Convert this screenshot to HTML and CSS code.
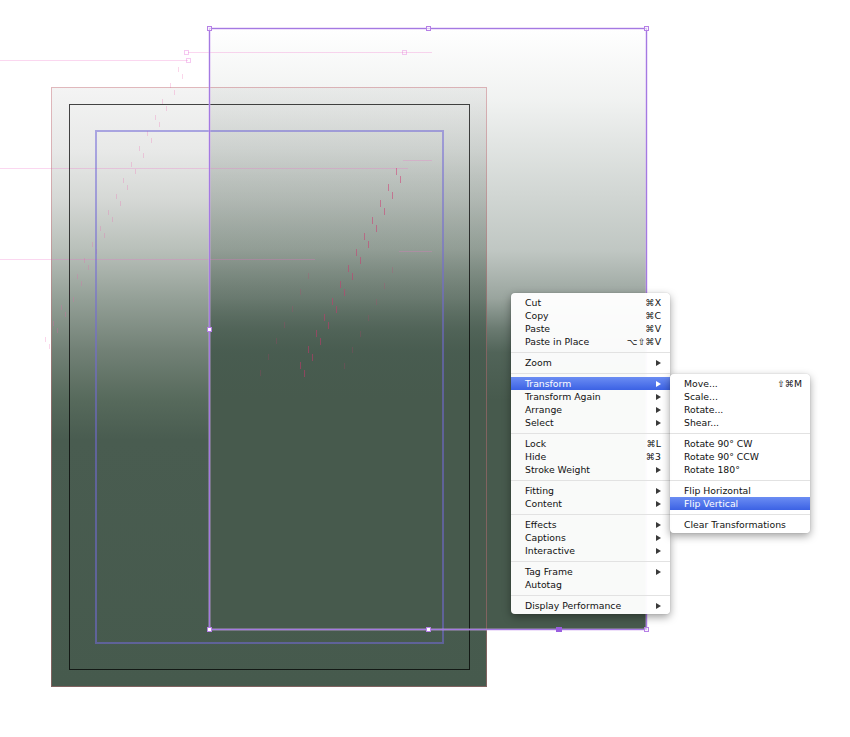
FILE: index.html
```html
<!DOCTYPE html>
<html>
<head>
<meta charset="utf-8">
<link rel="stylesheet" href="styles.css">
</head>
<body>
<div class="canvas">
  <div class="frame-a"></div>
  <div class="frame-b"></div>
  <svg class="overlay" width="850" height="737" viewBox="0 0 850 737">
    <g class="ghost">
      <path d="M0 60.5H188M188 52.5H432M0 168.5H408M403 160.5H432M0 259.5H315M399 251.5H432"/>
    </g>
    <g class="ghost-handles">
      <rect x="186.5" y="58.5" width="4" height="4"/>
      <rect x="184.5" y="50.5" width="4" height="4"/>
      <rect x="402.5" y="50.5" width="4" height="4"/>
    </g>
    <path class="dash-light" d="M178.5 67v5M170.5 83v5M162.5 99v5M155.5 115v5M147.5 131v5M139.5 146v5M131.5 162v5M123.5 178v5M116.5 194v5M108.5 210v5M100.5 226v5M92.5 242v5M84.5 258v5M77.5 274v5M69.5 290v5M61.5 305v5M53.5 321v5M45.5 337v5M182.5 74v5M174.5 90v5M166.5 106v5M159.5 122v5M151.5 138v5M143.5 153v5M135.5 169v5M127.5 185v5M120.5 201v5M112.5 217v5M104.5 233v5M96.5 249v5M88.5 265v5M81.5 281v5M73.5 297v5M65.5 312v5M57.5 328v5M49.5 344v5"/>
    <path class="dash-strong" d="M396.5 168v7M388.5 184v7M380.5 200v7M372.5 217v7M364.5 233v7M356.5 249v7M348.5 265v7M340.5 281v7M332.5 298v7M324.5 314v7M316.5 330v7M308.5 346v7M300.5 362v7M400.5 176v7M392.5 192v7M384.5 208v7M376.5 225v7M368.5 241v7M360.5 257v7M352.5 273v7M344.5 289v7M336.5 306v7M328.5 322v7M320.5 338v7M312.5 354v7M304.5 370v7"/>
    <path class="dash-faint" d="M308.5 273v6M300.5 289v6M292.5 306v6M284.5 322v6M276.5 338v6M268.5 354v6M260.5 370v6M392.5 267v6M384.5 283v6M376.5 299v6M368.5 315v6M360.5 331v6M352.5 347v6M344.5 363v6"/>
    <rect class="a-edge" x="51.5" y="87.5" width="435" height="599"/>
    <rect class="a-stroke" x="69.5" y="104.5" width="400" height="565"/>
    <rect class="a-inner" x="96" y="131" width="347" height="512"/>
    <rect class="b-glow" x="209.5" y="28.5" width="437" height="601"/>
    <rect class="b-sel" x="209.5" y="28.5" width="437" height="601"/>
    <g class="handles">
      <rect x="207.5" y="26.5" width="4" height="4"/>
      <rect x="426.5" y="26.5" width="4" height="4"/>
      <rect x="644.5" y="26.5" width="4" height="4"/>
      <rect x="644.5" y="627.5" width="4" height="4"/>
    </g>
    <g class="handles solid">
      <rect x="207.5" y="327.5" width="4" height="4"/>
      <rect x="207.5" y="627.5" width="4" height="4"/>
      <rect x="426.5" y="627.5" width="4" height="4"/>
    </g>
    <rect class="handle-fill" x="556" y="627" width="6" height="5"/>
  </svg>

  <div class="menu main-menu">
    <div class="item"><span>Cut</span><span class="key">⌘X</span></div>
    <div class="item"><span>Copy</span><span class="key">⌘C</span></div>
    <div class="item"><span>Paste</span><span class="key">⌘V</span></div>
    <div class="item"><span>Paste in Place</span><span class="key">⌥⇧⌘V</span></div>
    <div class="sep"></div>
    <div class="item"><span>Zoom</span><span class="arrow"></span></div>
    <div class="sep"></div>
    <div class="item active"><span>Transform</span><span class="arrow"></span></div>
    <div class="item"><span>Transform Again</span><span class="arrow"></span></div>
    <div class="item"><span>Arrange</span><span class="arrow"></span></div>
    <div class="item"><span>Select</span><span class="arrow"></span></div>
    <div class="sep"></div>
    <div class="item"><span>Lock</span><span class="key">⌘L</span></div>
    <div class="item"><span>Hide</span><span class="key">⌘3</span></div>
    <div class="item"><span>Stroke Weight</span><span class="arrow"></span></div>
    <div class="sep"></div>
    <div class="item"><span>Fitting</span><span class="arrow"></span></div>
    <div class="item"><span>Content</span><span class="arrow"></span></div>
    <div class="sep"></div>
    <div class="item"><span>Effects</span><span class="arrow"></span></div>
    <div class="item"><span>Captions</span><span class="arrow"></span></div>
    <div class="item"><span>Interactive</span><span class="arrow"></span></div>
    <div class="sep"></div>
    <div class="item"><span>Tag Frame</span><span class="arrow"></span></div>
    <div class="item"><span>Autotag</span></div>
    <div class="sep"></div>
    <div class="item"><span>Display Performance</span><span class="arrow"></span></div>
  </div>

  <div class="menu sub-menu">
    <div class="item"><span>Move...</span><span class="key">⇧⌘M</span></div>
    <div class="item"><span>Scale...</span></div>
    <div class="item"><span>Rotate...</span></div>
    <div class="item"><span>Shear...</span></div>
    <div class="sep"></div>
    <div class="item"><span>Rotate 90° CW</span></div>
    <div class="item"><span>Rotate 90° CCW</span></div>
    <div class="item"><span>Rotate 180°</span></div>
    <div class="sep"></div>
    <div class="item"><span>Flip Horizontal</span></div>
    <div class="item active"><span>Flip Vertical</span></div>
    <div class="sep"></div>
    <div class="item"><span>Clear Transformations</span></div>
  </div>
</div>
</body>
</html>
```

FILE: styles.css
```css
html, body {
  margin: 0;
  padding: 0;
  background: #ffffff;
}
body {
  width: 850px;
  height: 737px;
  overflow: hidden;
  font-family: "DejaVu Sans", "Liberation Sans", sans-serif;
}
.canvas {
  position: relative;
  width: 850px;
  height: 737px;
  background: #ffffff;
}
.frame-a {
  position: absolute;
  left: 51px;
  top: 87px;
  width: 436px;
  height: 600px;
  background: linear-gradient(to bottom,
    #f4f4f4 0%,
    #e8e9e8 10.5%,
    #d5d8d5 18.8%,
    #b9c0ba 27%,
    #939f96 35.5%,
    #728176 43.8%,
    #576a5c 52%,
    #495c50 58.8%,
    #465a4d 100%);
}
.frame-b {
  position: absolute;
  left: 209px;
  top: 28px;
  width: 437px;
  height: 601px;
  background: linear-gradient(to bottom,
    rgba(70, 90, 78, 0) 0%,
    rgba(70, 90, 78, 0.08) 12%,
    rgba(70, 90, 78, 0.22) 25%,
    rgba(70, 90, 78, 0.34) 37%,
    rgba(70, 90, 78, 0.55) 45%,
    rgba(70, 90, 78, 0.8) 50%,
    rgba(70, 90, 78, 0.94) 54%,
    rgba(71, 90, 77, 1) 62%,
    rgba(71, 90, 77, 1) 100%);
}
.overlay {
  position: absolute;
  left: 0;
  top: 0;
  fill: none;
}
.ghost path {
  stroke: rgba(240, 110, 200, 0.28);
  stroke-width: 1;
}
.ghost-handles rect {
  fill: none;
  stroke: rgba(230, 120, 220, 0.4);
  stroke-width: 1;
}
.dash-light {
  stroke: rgba(240, 90, 170, 0.25);
  stroke-width: 1;
}
.dash-strong {
  stroke: rgba(210, 50, 110, 0.5);
  stroke-width: 1;
}
.dash-faint {
  stroke: rgba(210, 50, 110, 0.2);
  stroke-width: 1;
}
.a-edge {
  stroke: rgba(200, 110, 120, 0.45);
  stroke-width: 1;
}
.a-stroke {
  stroke: rgba(0, 0, 0, 0.72);
  stroke-width: 1;
}
.a-inner {
  stroke: rgba(115, 105, 215, 0.55);
  stroke-width: 2;
}
.b-glow {
  stroke: rgba(210, 170, 240, 0.35);
  stroke-width: 3;
}
.b-sel {
  stroke: #a37ae2;
  stroke-width: 1;
}
.handles rect {
  fill: rgba(255, 255, 255, 0.6);
  stroke: #b680e6;
  stroke-width: 1;
}
.handles.solid rect {
  fill: #ffffff;
}
.handle-fill {
  fill: #9a5ee0;
}

/* context menus */
.menu {
  position: absolute;
  background: rgba(255, 255, 255, 0.97);
  border-radius: 4px;
  box-shadow: 0 3px 9px rgba(0, 0, 0, 0.38), 0 0 1px rgba(0, 0, 0, 0.3);
  padding: 3px 0 2px;
  box-sizing: border-box;
  font-size: 9.3px;
  color: #111111;
}
.main-menu {
  left: 511px;
  top: 293px;
  width: 159px;
}
.sub-menu {
  left: 670px;
  top: 374px;
  width: 140px;
}
.item {
  height: 13px;
  line-height: 13px;
  display: flex;
  align-items: center;
  justify-content: space-between;
  padding: 0 9px 0 14px;
  white-space: nowrap;
}
.sub-menu .item {
  padding-left: 14px;
  padding-right: 8px;
}
.item.active {
  background: linear-gradient(to bottom, #6b8df3, #3c62e4);
  color: #ffffff;
}
.arrow {
  width: 0;
  height: 0;
  border-left: 5px solid #3a3a3a;
  border-top: 3px solid transparent;
  border-bottom: 3px solid transparent;
}
.item.active .arrow {
  border-left-color: #ffffff;
}
.sep {
  height: 8px;
  display: flex;
  align-items: center;
}
.sep::before {
  content: "";
  display: block;
  width: 100%;
  height: 1px;
  background: #e2e2e2;
}
```
